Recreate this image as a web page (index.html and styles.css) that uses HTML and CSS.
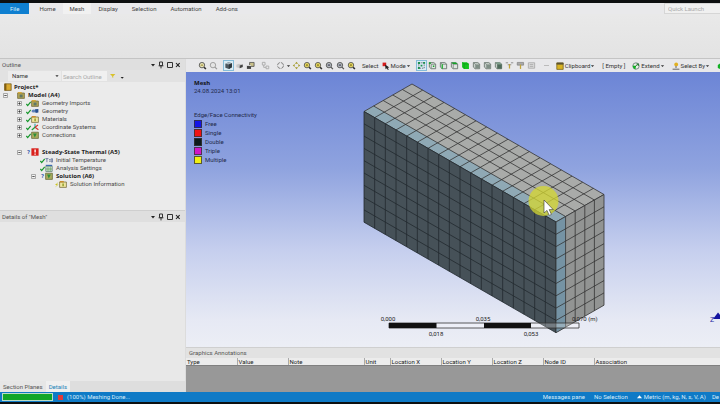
FILE: index.html
```html
<!DOCTYPE html>
<html lang="en">
<head>
<meta charset="utf-8">
<title>Mechanical - Mesh</title>
<link rel="stylesheet" href="styles.css">
</head>
<body>
<svg class="defs" aria-hidden="true">
  <symbol id="mag" viewBox="0 0 10 10"><path d="M6.6 6.8 8.8 9" stroke="#333" stroke-width="1.6"/><circle cx="4.4" cy="4.6" r="3" fill="#e9e4b4" stroke="#555"/><path d="M3 4.6h2.8" stroke="#8a7a20"/></symbol>
  <symbol id="mag-y" viewBox="0 0 10 10"><path d="M6.6 6.8 8.8 9" stroke="#333" stroke-width="1.6"/><circle cx="4.4" cy="4.6" r="3" fill="#f1e36a" stroke="#555"/><path d="M3 4.6h2.8M4.4 3.2V6" stroke="#8a7a20"/></symbol>
  <symbol id="mag-g" viewBox="0 0 10 10"><path d="M6.6 6.8 8.8 9" stroke="#555" stroke-width="1.4"/><circle cx="4.4" cy="4.6" r="3" fill="#b9c0c4" stroke="#555"/><path d="M3 3.6h2.8v2H3z" fill="#667" /></symbol>
  <symbol id="mag-l" viewBox="0 0 10 10"><path d="M6.6 6.8 8.8 9" stroke="#999" stroke-width="1.4"/><circle cx="4.4" cy="4.6" r="3" fill="#e4e4e4" stroke="#999"/></symbol>
  <symbol id="cube" viewBox="0 0 10 10"><path d="M1.5 3 5 1.4 8.8 2.6V7L5.4 8.8 1.5 7.4z" fill="#4d5960"/><path d="M1.5 3 5 1.4 8.8 2.6 5.4 4z" fill="#a9b8bf"/><path d="M5.4 4 8.8 2.6V7L5.4 8.8z" fill="#2f383d"/></symbol>
  <symbol id="cube-s" viewBox="0 0 10 10"><path d="M1.500 4.200 4.400 3l4.200.8v3L5.200 8 1.500 7z" fill="#c9c9c9"/><path d="M5.200 5 8.600 3.800v3L5.200 8z" fill="#444"/></symbol>
  <symbol id="cubes" viewBox="0 0 10 10"><path d="M1 5h4.6v3.8H1z" fill="#444"/><path d="M4 1.6h5V6H4z" fill="#c9c08a" stroke="#444" stroke-width=".8"/><path d="M1 5h4.6" stroke="#ddd"/></symbol>
  <symbol id="link" viewBox="0 0 10 10"><path d="M1.5 1.5h3v3h-3zM5.6 5.6h3v3h-3zM3 4.5v2.6h2.6" fill="none" stroke="#aaa"/></symbol>
  <symbol id="rot" viewBox="0 0 10 10"><circle cx="5" cy="5" r="3.3" fill="none" stroke="#777" stroke-dasharray="4 1.2"/></symbol>
  <symbol id="pan" viewBox="0 0 10 10"><path d="M5 .8 6.8 3H3.2zM5 9.2 3.2 7h3.6zM.8 5 3 3.2v3.6zM9.2 5 7 6.8V3.2z" fill="#a59b2c"/></symbol>
  <symbol id="car" viewBox="0 0 4 4"><path d="M.4 1.2h3.2L2 3z" fill="#333"/></symbol>
  <symbol id="box" viewBox="0 0 10 10"><path d="M1.5 1.8h5l2 1.6v5.2h-5l-2-1.8z" fill="#dde5df" stroke="#6b7770"/><path d="M1.8 2 3.6 3.6h4.6M3.6 3.6v4.8" fill="none" stroke="#6b7770" stroke-width=".8"/></symbol>
  <symbol id="box-v" viewBox="0 0 10 10"><use href="#box"/><path d="M1 1.4h2v1.8H1zM5.4 5h1.6v1.6H5.4z" fill="#19a52b"/></symbol>
  <symbol id="box-e" viewBox="0 0 10 10"><use href="#box"/><path d="M3.6 3.6v5" stroke="#19b52b" stroke-width="1.3"/></symbol>
  <symbol id="box-f" viewBox="0 0 10 10"><use href="#box"/><path d="M1.5 1.6h5l2 1.8h-5z" fill="#12a526"/></symbol>
  <symbol id="box-b" viewBox="0 0 10 10"><path d="M1.2 1.4h5.4l2.2 1.8v5.6H3.4L1.2 7z" fill="#14c41e"/><path d="M1.2 1.4 3.4 3.2h5.4M3.4 3.2v5.6" fill="none" stroke="#0a8a14" stroke-width=".6"/></symbol>
  <symbol id="box-n" viewBox="0 0 10 10"><use href="#box"/><path d="M4 4.4h4v3.8H4z" fill="#7f8f86"/></symbol>
  <symbol id="box-d" viewBox="0 0 10 10"><use href="#box"/><path d="M3.6 3.6h5v5h-5z" fill="#4e6b5a"/><path d="M1.5 1.8h5l2 1.8h-5z" fill="#7fa08c"/></symbol>
  <symbol id="pick" viewBox="0 0 10 10"><path d="M.8 2h2.6M6.6 2h2.6M3 4.2h4" stroke="#888"/><path d="M5 3.4v5" stroke="#c2a43a" stroke-width="1.4"/></symbol>
  <symbol id="pick2" viewBox="0 0 10 10"><path d="M1.4 1.6h7v3h-7z" fill="#aaa" stroke="#777" stroke-width=".7"/><path d="M5 4v4.8" stroke="#c2a43a" stroke-width="1.4"/></symbol>
  <symbol id="note" viewBox="0 0 10 10"><path d="M1.5 2h7v6h-7z" fill="#ddd" stroke="#aaa"/><path d="M3 4h4M3 6h4" stroke="#aaa"/></symbol>
  <symbol id="verts" viewBox="0 0 10 10"><path d="M2 2h6v6H2z" fill="none" stroke="#667" stroke-dasharray="1.6 1"/><path d="M1 1h2.4v2.2H1zM6.8 1H9v2H6.8zM1 6.8h2.2V9H1zM4 4.2h2v2H4z" fill="#1d8f4f"/></symbol>
  <symbol id="clip" viewBox="0 0 8 8"><path d="M.8 1h6.4v6.4H.8z" fill="#d8b323" stroke="#7b6720" stroke-width=".8"/><path d="M.6.6h6.8v2H.6z" fill="#5b5330"/></symbol>
  <symbol id="ext" viewBox="0 0 8 8"><circle cx="4" cy="4" r="3.2" fill="#e8f2e8" stroke="#566" stroke-width=".7"/><path d="M.8 3.6 4 4l-.6 3.4C1.6 7 .8 5.6.8 3.6z" fill="#0db31f"/><path d="M3 4.6 6.4 2M6.4 2H4.4M6.4 2v2" stroke="#147022" stroke-width=".8" fill="none"/></symbol>
  <symbol id="conv" viewBox="0 0 8 8"><path d="M.8 3 4 .8 7.200 3v3L4 7.400.8 6z" fill="#12b024"/><path d="M4 3.600 7.200 3v3L4 7.400z" fill="#26552c"/></symbol>
  <symbol id="selby" viewBox="0 0 8 8"><circle cx="4.2" cy="2.4" r="1.9" fill="#e1b021"/><path d="M4 4v2M.6 7.2h6.8" stroke="#555" stroke-width=".9"/></symbol>
  <symbol id="arrow" viewBox="0 0 8 8"><path d="M.6.6h3.6v3.6H.6z" fill="#d51c1c"/><path d="M3 2.4 7.4 5.4 5.6 5.8 6.8 7.6l-.9.3L4.8 6.2 3.6 7.2z" fill="#222"/></symbol>
  <symbol id="plus" viewBox="0 0 5 5"><path d="M.5.5h4v4h-4z" fill="#f2f2f2" stroke="#8b8b8b" stroke-width=".7"/><path d="M1.3 2.5h2.4M2.5 1.3v2.4" stroke="#333" stroke-width=".8"/></symbol>
  <symbol id="minus" viewBox="0 0 5 5"><path d="M.5.5h4v4h-4z" fill="#f2f2f2" stroke="#8b8b8b" stroke-width=".7"/><path d="M1.3 2.5h2.4" stroke="#333" stroke-width=".8"/></symbol>
  <symbol id="check" viewBox="0 0 5 8"><path d="M.4 5 1.7 6.6 4.7 3" fill="none" stroke="#14962a" stroke-width="1.2"/></symbol>
  <symbol id="bolt" viewBox="0 0 5 8"><path d="M4.4 2 1 5h2L.8 7.6 4.6 4.4H2.8z" fill="#c9c21a"/></symbol>
  <symbol id="book" viewBox="0 0 8 8"><path d="M.6.8h6.6v6.6H.6z" fill="#d9a92f" stroke="#6d5213" stroke-width=".7"/><path d="M.6.8h1.8v6.6H.6z" fill="#805d12"/></symbol>
  <symbol id="fold" viewBox="0 0 8 8"><path d="M.6 2h6.8v5.4H.6z" fill="#b3a655" stroke="#6b6334" stroke-width=".7"/><path d="M.8 1h4v1.4h-4z" fill="#d5a83c"/><path d="M2.6 3.6h3v2.8h-3z" fill="#5e7769"/></symbol>
  <symbol id="fold-y" viewBox="0 0 8 8"><path d="M.6 2h6.8v5.4H.6z" fill="#efe6a0" stroke="#6b6334" stroke-width=".7"/><path d="M.8 1h4v1.4h-4z" fill="#c98c2c"/><path d="M3.4 3.4h1.4v2.8H3.4z" fill="#8a9a22"/></symbol>
  <symbol id="fold-g" viewBox="0 0 8 8"><path d="M.6 1.2h6.8v6.2H.6z" fill="#a9aa5c" stroke="#5f6330" stroke-width=".7"/><path d="M2 2.6h3.8l-2 4z" fill="#2c8d3a"/></symbol>
  <symbol id="geo" viewBox="0 0 8 8"><ellipse cx="2.8" cy="4" rx="2.3" ry="1.6" fill="#5f83b8"/><path d="M4 2.2 7.4 2v3.6L4.6 6z" fill="#27508f"/></symbol>
  <symbol id="axes" viewBox="0 0 8 8"><path d="M4 4.2V.8" stroke="#23a6a6" stroke-width="1.1"/><path d="M4 4.2 7.4 6.8M4 4.2 7 2" stroke="#d0342e" stroke-width="1.1"/><path d="M4 4.2.8 7" stroke="#1f9c3a" stroke-width="1.2"/></symbol>
  <symbol id="therm" viewBox="0 0 8 8"><path d="M.4.3h7.2v7.4H.4z" fill="#d9201c"/><path d="M3.4 1.4h1.4v3.2H3.4zM3.4 5.4h1.4v1.3H3.4z" fill="#fff"/></symbol>
  <symbol id="temp" viewBox="0 0 8 8"><path d="M.4 2.6h3M1.9 2.6v3.6M4 3.6h1.6M4 5.2h1.6M6.2 2.8h1.4v3.2H6.2z" fill="none" stroke="#5a6c94" stroke-width=".8"/></symbol>
  <symbol id="sett" viewBox="0 0 8 8"><path d="M.8 2.2h6.4v5.2H.8z" fill="#dde8dd" stroke="#5f7f71" stroke-width=".8"/><path d="M.8 1.4h6.4" stroke="#3d6bb0" stroke-width="1.2"/><path d="M3 2.6v4.6M5.2 2.6v4.6M1 5h6" stroke="#5a9c55" stroke-width=".7"/></symbol>
  <symbol id="wins" viewBox="0 0 30 8"><path d="M1 3h4L3 5.4z" fill="#222"/><path d="M9.5 1h3v3.6h-3zM8.6 4.8h4.8M11 4.8V7.4" stroke="#333" fill="none"/><path d="M17.5 1.5h5v5h-5z" fill="none" stroke="#333"/><path d="M26 2l3.6 4M29.6 2 26 6" stroke="#222" stroke-width="1.1"/></symbol>
</svg>

<div class="edge edge-top"></div>
<header class="ribbon">
  <nav class="tabs">
    <button class="tab file">File</button>
    <button class="tab">Home</button>
    <button class="tab active">Mesh</button>
    <button class="tab">Display</button>
    <button class="tab">Selection</button>
    <button class="tab">Automation</button>
    <button class="tab">Add-ons</button>
    <input class="quick" type="text" placeholder="Quick Launch" aria-label="Quick Launch">
  </nav>
  <div class="ribbon-body"></div>
</header>

<main class="work">
  <aside class="side">
    <section class="outline">
      <header class="bar"><h2>Outline</h2><svg class="wins"><use href="#wins"/></svg></header>
      <div class="filter">
        <select class="by" aria-label="Filter by"><option>Name</option></select>
        <svg class="by-caret"><use href="#car"/></svg>
        <input class="find" type="text" placeholder="Search Outline" aria-label="Search Outline">
        <svg class="funnel" viewBox="0 0 16 8"><path d="M1 2h5.4L4.2 4.2V6l-1-.8v-1z" fill="#d8c22c"/><path d="M11.6 5h3.2l-1.6 1.8z" fill="#222"/></svg>
      </div>
      <div class="tree">
        <div class="row root"><svg class="ic"><use href="#book"/></svg><b>Project*</b></div>
        <ul>
          <li>
            <div class="row"><svg class="ex"><use href="#minus"/></svg><span class="st"></span><svg class="ic"><use href="#fold"/></svg><b>Model (A4)</b></div>
            <ul>
              <li class="row"><svg class="ex"><use href="#plus"/></svg><svg class="st"><use href="#check"/></svg><svg class="ic"><use href="#fold"/></svg>Geometry Imports</li>
              <li class="row"><svg class="ex"><use href="#plus"/></svg><svg class="st"><use href="#check"/></svg><svg class="ic"><use href="#geo"/></svg>Geometry</li>
              <li class="row"><svg class="ex"><use href="#plus"/></svg><svg class="st"><use href="#check"/></svg><svg class="ic"><use href="#fold-y"/></svg>Materials</li>
              <li class="row"><svg class="ex"><use href="#plus"/></svg><svg class="st"><use href="#check"/></svg><svg class="ic"><use href="#axes"/></svg>Coordinate Systems</li>
              <li class="row"><svg class="ex"><use href="#plus"/></svg><svg class="st"><use href="#check"/></svg><svg class="ic"><use href="#fold-g"/></svg>Connections</li>
              <li class="analysis">
                <div class="row"><svg class="ex"><use href="#minus"/></svg><span class="st q">?</span><svg class="ic"><use href="#therm"/></svg><b>Steady-State Thermal (A5)</b></div>
                <ul>
                  <li class="row"><span class="ex"></span><svg class="st"><use href="#check"/></svg><svg class="ic"><use href="#temp"/></svg>Initial Temperature</li>
                  <li class="row"><span class="ex"></span><svg class="st"><use href="#check"/></svg><svg class="ic"><use href="#sett"/></svg>Analysis Settings</li>
                  <li>
                    <div class="row"><svg class="ex"><use href="#minus"/></svg><span class="st q">?</span><svg class="ic"><use href="#fold-g"/></svg><b>Solution (A6)</b></div>
                    <ul>
                      <li class="row"><span class="ex"></span><svg class="st"><use href="#bolt"/></svg><svg class="ic"><use href="#fold-y"/></svg>Solution Information</li>
                    </ul>
                  </li>
                </ul>
              </li>
            </ul>
          </li>
        </ul>
      </div>
    </section>
    <section class="details">
      <header class="bar"><h2>Details of "Mesh"</h2><svg class="wins"><use href="#wins"/></svg></header>
      <div class="details-body"></div>
      <nav class="panes"><button>Section Planes</button><button class="on">Details</button></nav>
    </section>
  </aside>

  <section class="stage">
    <div class="tools">
      <div class="grp">
        <button aria-label="Zoom in"><svg><use href="#mag"/></svg></button>
        <button aria-label="Zoom out"><svg><use href="#mag-l"/></svg></button>
      </div>
      <div class="grp">
        <button class="sel" aria-label="Shaded"><svg><use href="#cube"/></svg></button>
        <button aria-label="Wireframe"><svg><use href="#cube-s"/></svg></button>
        <button aria-label="Views"><svg><use href="#cubes"/></svg></button>
      </div>
      <div class="grp"><button aria-label="Link views"><svg><use href="#link"/></svg></button></div>
      <div class="grp">
        <button aria-label="Rotate"><svg><use href="#rot"/></svg></button>
        <svg class="car"><use href="#car"/></svg>
        <button aria-label="Pan"><svg><use href="#pan"/></svg></button>
        <button aria-label="Zoom"><svg><use href="#mag-y"/></svg></button>
        <button aria-label="Box zoom"><svg><use href="#mag-y"/></svg></button>
        <button aria-label="Zoom to fit"><svg><use href="#mag-g"/></svg></button>
        <button aria-label="Zoom selection"><svg><use href="#mag-g"/></svg></button>
        <button aria-label="Magnifier"><svg><use href="#mag-y"/></svg></button>
      </div>
      <div class="grp mode">
        <span>Select</span>
        <button class="txt"><svg><use href="#arrow"/></svg>Mode<svg class="car"><use href="#car"/></svg></button>
      </div>
      <div class="grp">
        <button class="sel" aria-label="Smart select"><svg><use href="#verts"/></svg></button>
        <button aria-label="Vertex"><svg><use href="#box-v"/></svg></button>
        <button aria-label="Edge"><svg><use href="#box-e"/></svg></button>
        <button aria-label="Face"><svg><use href="#box-f"/></svg></button>
        <button aria-label="Body"><svg><use href="#box-b"/></svg></button>
        <button aria-label="Node"><svg><use href="#box-n"/></svg></button>
        <button aria-label="Element face"><svg><use href="#box-n"/></svg></button>
        <button aria-label="Element"><svg><use href="#box-d"/></svg></button>
        <button aria-label="Hit point"><svg><use href="#pick"/></svg></button>
        <button aria-label="Coordinates"><svg><use href="#pick2"/></svg></button>
        <button aria-label="Label"><svg><use href="#note"/></svg></button>
      </div>
      <div class="grp last">
        <span class="dash"></span>
        <button class="txt"><svg><use href="#clip"/></svg>Clipboard<svg class="car"><use href="#car"/></svg></button>
        <span>[ Empty ]</span>
        <button class="txt"><svg><use href="#ext"/></svg>Extend<svg class="car"><use href="#car"/></svg></button>
        <button class="txt"><svg><use href="#selby"/></svg>Select By<svg class="car"><use href="#car"/></svg></button>
        <button class="txt" aria-label="Convert"><svg><use href="#conv"/></svg></button>
      </div>
    </div>

    <div class="view">
      <div class="legend">
        <h1>Mesh</h1>
        <p>24.08.2024 13:01</p>
        <h3>Edge/Face Connectivity</h3>
        <ul>
          <li><i class="free"></i>Free</li>
          <li><i class="single"></i>Single</li>
          <li><i class="double"></i>Double</li>
          <li><i class="triple"></i>Triple</li>
          <li><i class="multi"></i>Multiple</li>
        </ul>
      </div>
      <svg class="scene" viewBox="186 72 534 275">
        <!-- Block of 18 x 5 x 9 cells; every face is drawn in cell units -->
        <g transform="matrix(10.667 6.139 9.6 -5.5 364 111.5)">
          <path d="M0 0H18V5H0z" fill="#a9aba9"/><path d="M0 0H18V1H0z" fill="#8fa9b5"/>
          <path class="mesh" d="M0 0H18M0 1H18M0 2H18M0 3H18M0 4H18M0 5H18M0 0V5M1 0V5M2 0V5M3 0V5M4 0V5M5 0V5M6 0V5M7 0V5M8 0V5M9 0V5M10 0V5M11 0V5M12 0V5M13 0V5M14 0V5M15 0V5M16 0V5M17 0V5M18 0V5"/>
        </g>
        <g transform="matrix(10.667 6.139 0 12.3 364 111.5)">
          <path d="M0 0H18V9H0z" fill="#465158"/>
          <path class="mesh dark" d="M0 0H18M0 1H18M0 2H18M0 3H18M0 4H18M0 5H18M0 6H18M0 7H18M0 8H18M0 9H18M0 0V9M1 0V9M2 0V9M3 0V9M4 0V9M5 0V9M6 0V9M7 0V9M8 0V9M9 0V9M10 0V9M11 0V9M12 0V9M13 0V9M14 0V9M15 0V9M16 0V9M17 0V9M18 0V9"/>
        </g>
        <g transform="matrix(9.6 -5.5 0 12.3 556 222)">
          <path d="M0 0H5V9H0z" fill="#929493"/><path d="M0 0H1V9H0z" fill="#7593a4"/>
          <path class="mesh" d="M0 0H5M0 1H5M0 2H5M0 3H5M0 4H5M0 5H5M0 6H5M0 7H5M0 8H5M0 9H5M0 0V9M1 0V9M2 0V9M3 0V9M4 0V9M5 0V9"/>
        </g>
        <g class="ruler">
          <path d="M389 323h190v5H389z" fill="#fff" fill-opacity=".25" stroke="#333" stroke-width=".8"/>
          <path d="M389 323h47.500v5H389zM484 323h47v5H484z" fill="#111"/>
          <text x="388" y="321" text-anchor="middle">0,000</text>
          <text x="436" y="336" text-anchor="middle">0,018</text>
          <text x="483" y="321" text-anchor="middle">0,035</text>
          <text x="531" y="336" text-anchor="middle">0,053</text>
          <text x="572" y="321">0,070 (m)</text>
        </g>
        <circle cx="543.500" cy="201" r="15" fill="#d6d832" fill-opacity=".75"/>
        <path d="M544 200v13l3-2.600 2.200 5 2.200-1-2.200-4.800h4z" fill="#fff" stroke="#333" stroke-width=".6"/>
        <path d="M713 319 718 312.500 724 319z" fill="#1414a0"/>
        <text class="axis" x="710" y="322">Z</text>
      </svg>
    </div>

    <section class="notes">
      <h2>Graphics Annotations</h2>
      <table>
        <thead><tr><th class="w51">Type</th><th class="w51">Value</th><th class="w76">Note</th><th class="w26">Unit</th><th class="w51">Location X</th><th class="w51">Location Y</th><th class="w51">Location Z</th><th class="w51">Node ID</th><th>Association</th></tr></thead>
      </table>
      <div class="empty"></div>
    </section>
  </section>
</main>

<footer class="status">
  <div class="progress" role="progressbar" aria-label="Meshing" aria-valuenow="100"></div>
  <button class="stop" aria-label="Stop"></button>
  <span>(100%) Meshing Done...</span>
  <div class="right">
    <span>Messages pane</span>
    <span>No Selection</span>
    <span class="unit"><svg viewBox="0 0 6 6"><path d="M0 4.600 3 1l3 3.600z" fill="#fff"/></svg>Metric (m, kg, N, s, V, A)</span>
    <span class="deg">De</span>
  </div>
</footer>
<div class="edge edge-bottom"></div>
</body>
</html>
```

FILE: styles.css
```css
* { box-sizing: border-box; }

body {
  margin: 0;
  height: 100vh;
  display: flex;
  flex-direction: column;
  overflow: hidden;
  background: #e8e8e8;
  color: #333;
  font: 6px/8px Roboto, "Open Sans", sans-serif;
}

h1, h2, h3, p, ul { margin: 0; padding: 0; font: inherit; list-style: none; }
svg { display: block; flex: none; }
button, input, select { margin: 0; padding: 0; border: 0; background: none; color: inherit; font: inherit; border-radius: 0; }
.defs { position: absolute; width: 0; height: 0; }

.edge { flex: none; background: #0d0f10; }
.edge-top { height: 3px; }
.edge-bottom { height: 2px; }

/* Ribbon */
.tabs { display: flex; height: 11px; background: #e9e9eb; }
.tab { padding: 0 7px; color: #444; }
.tab.file { padding: 0 10px; margin-right: 3px; background: #0f7fd0; color: #d5ecfb; }
.tab.active { background: #f1f1f1; }
.quick { width: 56px; margin-left: auto; padding-left: 3px; background: #f0f0f0; border: 1px solid #d6d6d6; border-right: 0; }
::placeholder { color: #a9a9a9; opacity: 1; }
.ribbon-body { height: 45px; background: linear-gradient(#e9e9e9, #e3e3e3); border-bottom: 1px solid #c4c4c4; }

/* Work area */
.work { flex: 1; min-height: 0; display: grid; grid-template-columns: 186px minmax(0, 1fr); }
.side { display: grid; grid-template-rows: 151px minmax(0, 1fr); border-right: 1px solid #dcdcdc; }
.outline, .details { display: flex; flex-direction: column; min-height: 0; }
.bar { display: flex; align-items: center; justify-content: space-between; height: 11px; padding: 0 5px 0 2px; background: #dfdfdf; color: #555; }
.wins { width: 30px; height: 8px; }

.filter { display: flex; align-items: center; height: 12px; padding-left: 8px; background: #e2e2e2; }
.by { width: 53px; height: 10px; padding-left: 4px; background: #ececec; appearance: none; }
.by-caret { width: 4px; height: 4px; margin: 0 2px 0 -6px; }
.find { width: 45px; height: 10px; margin-left: 1px; padding-left: 1px; background: #f0f0f0; }
.funnel { width: 16px; height: 8px; margin-left: 2px; }

.tree { flex: 1; padding: 1px 3px; background: #ebebeb; }
.tree ul ul { margin-left: 14px; }
.row { display: flex; align-items: center; height: 8px; white-space: nowrap; color: #4a4a4a; }
.row b { color: #222; font-family: "Open Sans", sans-serif; }
.ex { width: 5px; height: 5px; margin-right: 4px; }
.st { width: 5px; height: 8px; }
.q { color: #2a4fa8; font-weight: 700; text-align: center; }
.ic { width: 8px; height: 8px; margin-right: 3px; }
.root { padding-left: 1px; }
.root .ic { margin-right: 2px; }
.analysis { margin-top: 9px; }

.details { border-top: 1px solid #cfcfcf; }
.details-body { flex: 1; background: #e8e8e8; }
.panes { display: flex; height: 11px; background: #dedede; }
.panes button { padding: 0 3px; color: #555; background: #e6e6e6; }
.panes .on { color: #1b83b8; background: #efefef; }

/* Graphics toolbar */
.stage { display: flex; flex-direction: column; min-width: 0; }
.tools { display: flex; align-items: center; gap: 4px; height: 13px; padding-left: 11px; background: #e8e8ea; white-space: nowrap; overflow: hidden; }
.grp { display: flex; align-items: center; flex: none; }
.grp button { width: 11px; height: 11px; display: flex; align-items: center; justify-content: center; flex: none; }
.grp button svg { width: 9px; height: 9px; }
.grp .sel { background: #d9ecf5; border: 1px solid #85bcd8; }
.grp .car, .grp button .car { width: 5px; height: 4px; }
.grp .txt { width: auto; }
.grp .txt svg:first-child { width: 8px; height: 8px; margin-right: 1px; }
.mode { gap: 3px; margin: 0 1px; }
.last { gap: 7px; margin-left: 3px; }
.dash { width: 5px; border-bottom: 1px solid #bbb; }

/* 3D view */
.view { flex: 1; min-height: 0; position: relative; background: linear-gradient(#6c85d6, #8fa3df 35%, #c6cfee 65%, #e6e9f4 90%, #eceef5); }
.scene { width: 100%; height: 100%; }
.mesh { fill: none; stroke: #333; stroke-width: .8px; vector-effect: non-scaling-stroke; }
.mesh.dark { stroke: #22292e; }
.ruler text { fill: #222; }
.axis { fill: #2626a0; font-size: 7px; }
.legend { position: absolute; top: 7px; left: 8px; color: #1f2a4a; }
.legend h1 { font-weight: 700; font-family: "Open Sans", sans-serif; color: #111; }
.legend h3 { margin-top: 16px; }
.legend li { display: flex; align-items: center; gap: 3px; height: 9px; }
.legend i { width: 8px; height: 8px; border: 1px solid #333c; }
.free { background: #1414e6; }
.single { background: #f01414; }
.double { background: #0d1a1a; }
.triple { background: #d016c8; }
.multi { background: #f0f014; }

/* Annotations */
.notes { display: flex; flex-direction: column; height: 45px; border-top: 1px solid #cfcfcf; }
.notes h2 { height: 10px; padding: 1px 3px 0; background: #e2e2e2; color: #555; }
.notes table { width: 100%; table-layout: fixed; border-collapse: collapse; background: #ececec; }
.notes th { height: 7px; padding: 0 1px; font-weight: 400; line-height: 7px; text-align: left; color: #222; border-right: 1px solid #aaa; }
.notes th:last-child { border-right: 0; }
.w26 { width: 26px; }
.w51 { width: 51px; }
.w76 { width: 76px; }
.empty { flex: 1; background: #989898; border-top: 1px solid #808080; }

/* Status bar */
.status { flex: none; display: flex; align-items: center; height: 10px; padding-left: 2px; background: #0f7ac6; color: #d8ecfa; white-space: nowrap; }
.progress { width: 51px; height: 8px; background: #10a628; border: 1px solid #b9dcc8; }
.stop { width: 5px; height: 5px; margin: 0 4px 0 5px; background: #e23a3a; }
.right { display: flex; gap: 9px; margin-left: auto; }
.unit { display: flex; align-items: center; gap: 2px; }
.unit svg { width: 5px; height: 6px; }
.deg { margin: 0 1px 0 -3px; }
```
